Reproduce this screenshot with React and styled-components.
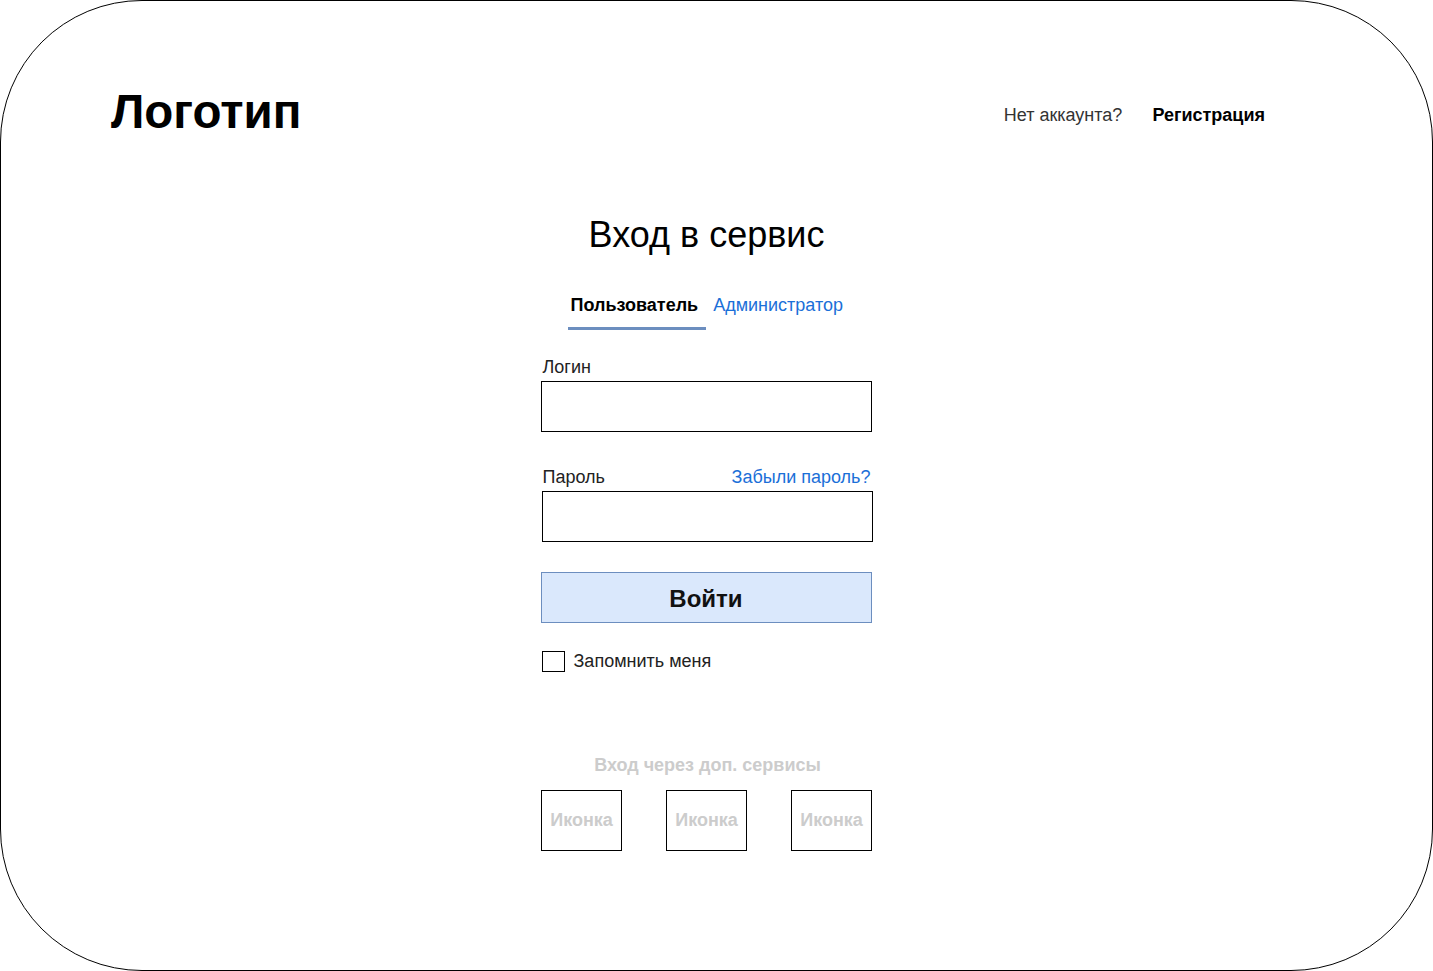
import React from "react";
import styled, { createGlobalStyle } from "styled-components";

const GlobalStyle = createGlobalStyle`
  html, body {
    margin: 0;
    padding: 0;
    background: #ffffff;
  }
  body {
    font-family: "Liberation Sans", Arial, sans-serif;
    color: #000;
  }
`;

const Frame = styled.div`
  box-sizing: border-box;
  width: 1433px;
  height: 971px;
  border: 1px solid #000;
  border-radius: 142px;
  background: #fff;
  display: flex;
  flex-direction: column;
  align-items: center;
  overflow: hidden;
`;

const Header = styled.header`
  box-sizing: border-box;
  width: 100%;
  display: flex;
  justify-content: space-between;
  align-items: center;
  padding: 83px 167px 0 110px;
`;

const Logo = styled.div`
  font-weight: bold;
  font-size: 47.5px;
  line-height: 56px;
`;

const SignUp = styled.div`
  display: flex;
  gap: 30px;
  font-size: 18px;
  padding-top: 6px;
`;

const SignUpText = styled.span`
  color: #333;
`;

const SignUpLink = styled.a`
  color: #000;
  font-weight: bold;
  text-decoration: none;
`;

const Form = styled.main`
  width: 332px;
  display: flex;
  flex-direction: column;
  margin-top: 74px;
  margin-right: 20px;
`;

const Title = styled.h1`
  margin: 0;
  font-weight: normal;
  font-size: 36px;
  line-height: 42px;
  text-align: center;
`;

const Tabs = styled.div`
  display: flex;
  padding-left: 27px;
  margin-top: 36px;
`;

const Tab = styled.button`
  border: none;
  background: none;
  font-family: "Liberation Sans", Arial, sans-serif;
  font-size: 18px;
  line-height: 20px;
  padding: 3px ${(p) => (p.$active ? "8px 12px 3px" : "0 12px 7px")};
  font-weight: ${(p) => (p.$active ? "bold" : "normal")};
  color: ${(p) => (p.$active ? "#000" : "#1b6fd8")};
  border-bottom: 3px solid ${(p) => (p.$active ? "#6c8ebf" : "transparent")};
`;

const Field = styled.div`
  display: flex;
  flex-direction: column;
  margin-top: ${(p) => p.$top || 0}px;
`;

const LabelRow = styled.div`
  display: flex;
  justify-content: space-between;
  align-items: baseline;
  padding: 0 2px;
  height: 24px;
  font-size: 18px;
`;

const Label = styled.label`
  color: #222;
`;

const Forgot = styled.a`
  color: #1b6fd8;
  text-decoration: none;
`;

const Input = styled.input`
  box-sizing: border-box;
  width: 331px;
  height: 51px;
  border: 1px solid #000;
  border-radius: 0;
  outline: none;
  margin: 0;
  margin-left: ${(p) => p.$shift || 0}px;
  font-size: 16px;
`;

const Submit = styled.button`
  box-sizing: border-box;
  width: 331px;
  height: 51px;
  margin-top: 30px;
  padding-top: 3px;
  background: #dae8fc;
  border: 1px solid #6c8ebf;
  font-family: "Liberation Sans", Arial, sans-serif;
  font-weight: bold;
  font-size: 24px;
  color: #111;
`;

const Remember = styled.label`
  display: flex;
  align-items: center;
  gap: 9px;
  margin-top: 28px;
  margin-left: 1px;
  font-size: 18px;
  line-height: 21px;
  color: #222;
`;

const Box = styled.span`
  box-sizing: border-box;
  width: 23px;
  height: 21px;
  border: 1px solid #000;
`;

const Social = styled.section`
  display: flex;
  flex-direction: column;
  align-items: center;
  margin-top: 83px;
`;

const SocialTitle = styled.div`
  font-weight: bold;
  font-size: 18px;
  line-height: 21px;
  color: #cccccc;
  margin-left: 2px;
`;

const IconRow = styled.div`
  display: flex;
  gap: 44px;
  margin-top: 14px;
`;

const IconBox = styled.div`
  box-sizing: border-box;
  width: 81px;
  height: 61px;
  border: 1px solid #000;
  display: flex;
  align-items: center;
  justify-content: center;
  font-weight: bold;
  font-size: 18px;
  color: #cccccc;
`;

export default function App() {
  return (
    <>
      <GlobalStyle />
      <Frame>
        <Header>
          <Logo>Логотип</Logo>
          <SignUp>
            <SignUpText>Нет аккаунта?</SignUpText>
            <SignUpLink href="#">Регистрация</SignUpLink>
          </SignUp>
        </Header>
        <Form>
          <Title>Вход в сервис</Title>
          <Tabs>
            <Tab $active>Пользователь</Tab>
            <Tab>Администратор</Tab>
          </Tabs>
          <Field $top={27}>
            <LabelRow>
              <Label>Логин</Label>
            </LabelRow>
            <Input type="text" />
          </Field>
          <Field $top={35}>
            <LabelRow>
              <Label>Пароль</Label>
              <Forgot href="#">Забыли пароль?</Forgot>
            </LabelRow>
            <Input type="password" $shift={1} />
          </Field>
          <Submit>Войти</Submit>
          <Remember>
            <Box />
            Запомнить меня
          </Remember>
          <Social>
            <SocialTitle>Вход через доп. сервисы</SocialTitle>
            <IconRow>
              <IconBox>Иконка</IconBox>
              <IconBox>Иконка</IconBox>
              <IconBox>Иконка</IconBox>
            </IconRow>
          </Social>
        </Form>
      </Frame>
    </>
  );
}
